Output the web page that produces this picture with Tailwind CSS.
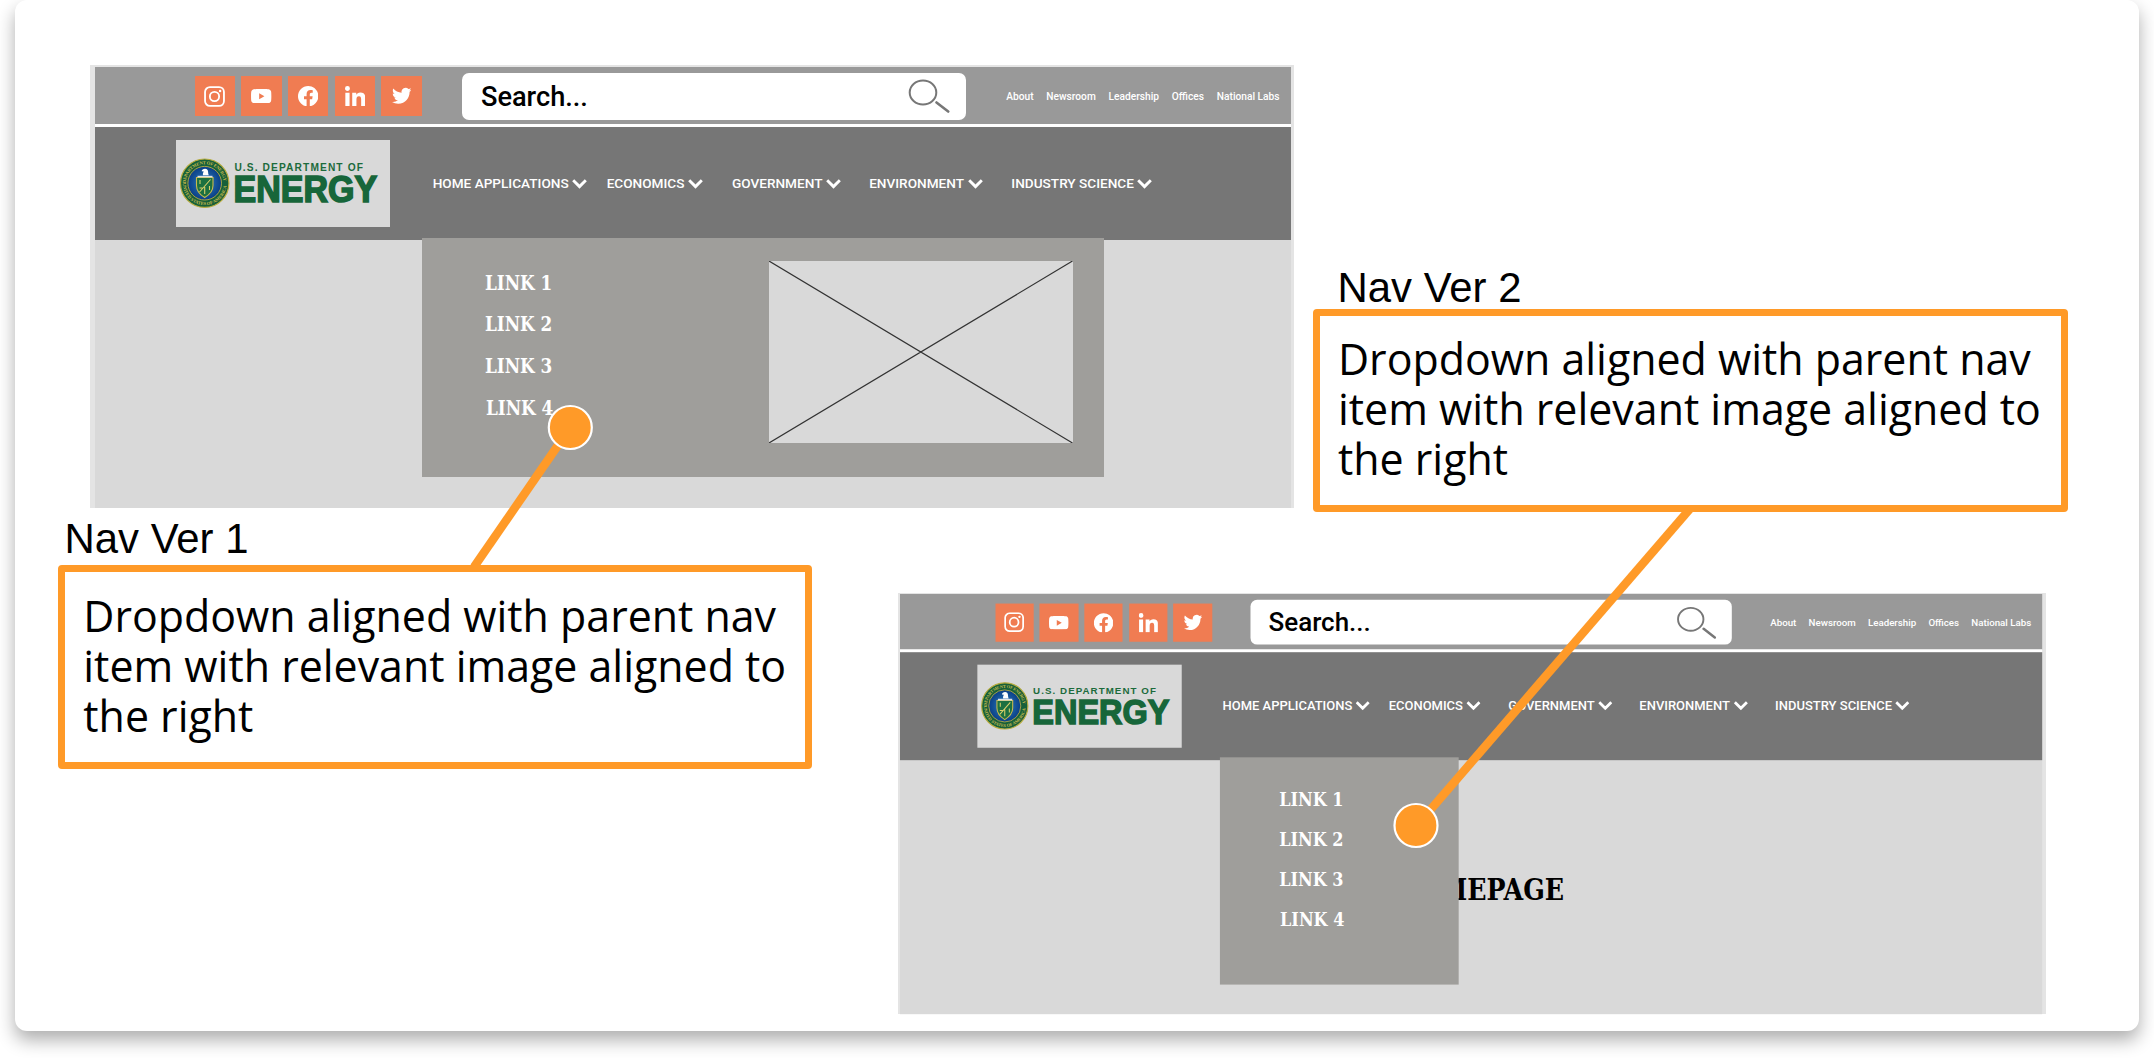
<!DOCTYPE html>
<html lang="en">
<head>
<meta charset="utf-8">
<title>Navigation versions</title>
<script src="https://cdn.jsdelivr.net/npm/@tailwindcss/browser@4"></script>
</head>
<body class="h-[1058px] overflow-hidden bg-white font-['Roboto',sans-serif]">

<!-- Shared site header: utility bar and main navigation -->
<template id="site-header">
  <div class="flex h-[57.5px] w-[1196px] items-center bg-[#999999] pt-[2px] pl-[99.7px] whitespace-nowrap">
    <div class="flex gap-[6.4px]">
      <span class="flex size-[40.3px] items-center justify-center bg-[#f07c52]">
        <svg class="size-[21px]" viewBox="0 0 24 24" fill="none" stroke="white"><rect x="1.2" y="1.2" width="21.6" height="21.6" rx="5.6" stroke-width="2.1"/><circle cx="12" cy="12" r="5.3" stroke-width="2.1"/><circle cx="18.4" cy="5.6" r="1.4" fill="white" stroke="none"/></svg>
      </span>
      <span class="flex size-[40.3px] items-center justify-center bg-[#f07c52]">
        <svg class="h-[14.4px] w-[20.4px]" viewBox="0 0 24 17" fill="white"><path fill-rule="evenodd" d="M12 0C6 0 3.500.2 2.600.5 1.500.8.700 1.600.400 2.600.1 3.600 0 6 0 8.500s.1 4.900.4 5.900c.3 1 1.100 1.800 2.200 2.100.9.3 3.400.5 9.400.5s8.500-.2 9.400-.5c1.100-.3 1.900-1.100 2.200-2.100.3-1 .4-3.400.4-5.900s-.1-4.900-.4-5.900c-.3-1-1.100-1.800-2.200-2.100C20.500.2 18 0 12 0zM9.600 4.900l6.200 3.600-6.200 3.600z"/></svg>
      </span>
      <span class="flex size-[40.3px] items-center justify-center bg-[#f07c52]">
        <svg class="size-[20.4px]" viewBox="0 0 24 24" fill="white"><path d="M24 12.073c0-6.627-5.373-12-12-12s-12 5.373-12 12c0 5.990 4.388 10.954 10.125 11.854v-8.385H7.078v-3.470h3.047V9.430c0-3.007 1.792-4.669 4.533-4.669 1.312 0 2.686.235 2.686.235v2.953H15.830c-1.491 0-1.956.925-1.956 1.874v2.250h3.328l-.532 3.470h-2.796v8.385C19.612 23.027 24 18.062 24 12.073z"/></svg>
      </span>
      <span class="flex size-[40.3px] items-center justify-center bg-[#f07c52]">
        <svg class="size-[20.4px]" viewBox="0 0 448 448" fill="white"><path d="M100.280 448H7.400V148.900h92.880zM53.790 108.100C24.090 108.100 0 83.500 0 53.800a53.790 53.790 0 0 1 107.580 0c0 29.700-24.100 54.300-53.790 54.300zM447.900 448h-92.680V302.400c0-34.700-.7-79.200-48.290-79.200-48.290 0-55.690 37.700-55.690 76.700V448h-92.780V148.900h89.080v40.800h1.300c12.400-23.500 42.690-48.300 87.880-48.300 94 0 111.280 61.900 111.280 142.300V448z"/></svg>
      </span>
      <span class="flex size-[40.3px] items-center justify-center bg-[#f07c52]">
        <svg class="size-[19.6px]" viewBox="0 0 24 24" fill="white"><path d="M23.953 4.570a10 10 0 01-2.825.775 4.958 4.958 0 002.163-2.723c-.951.555-2.005.959-3.127 1.184a4.920 4.920 0 00-8.384 4.482C7.690 8.095 4.067 6.130 1.640 3.162a4.822 4.822 0 00-.666 2.475c0 1.710.870 3.213 2.188 4.096a4.904 4.904 0 01-2.228-.616v.06a4.923 4.923 0 003.946 4.827 4.996 4.996 0 01-2.212.085 4.936 4.936 0 004.604 3.417 9.867 9.867 0 01-6.102 2.105c-.39 0-.779-.023-1.170-.067a13.995 13.995 0 007.557 2.209c9.053 0 13.998-7.496 13.998-13.985 0-.21 0-.42-.015-.63A9.935 9.935 0 0024 4.590z"/></svg>
      </span>
    </div>
    <div class="ml-[40.500px] flex h-[46.700px] w-[504px] items-center rounded-[7px] bg-white pl-[18.700px]">
      <span class="pt-[2px] text-[27.200px] leading-none font-medium text-black">Search...</span>
      <svg class="ml-auto mr-[16.500px] h-[34px] w-[42px]" viewBox="0 0 42 34" fill="none" stroke="#777777"><ellipse cx="15" cy="13.500" rx="13.300" ry="12" stroke-width="2"/><path d="M28.500 23.500 40.200 32.500" stroke-width="2.600" stroke-linecap="round"/></svg>
    </div>
    <nav class="ml-[40px] flex gap-[12.800px] pt-[1.500px] text-[10.200px] leading-none font-medium text-white">
      <span>About</span><span>Newsroom</span><span>Leadership</span><span>Offices</span><span>National Labs</span>
    </nav>
  </div>
  <div class="h-[3px] w-[1196px] bg-white"></div>
  <div class="flex h-[113px] w-[1196px] items-center bg-[#767676] pl-[80.500px]">
    <svg class="h-[87px] w-[214px] bg-[#d9d9d9]" viewBox="0 0 214 87">
      <defs>
        <radialGradient id="seal-blue"><stop offset="0" stop-color="#2f7fc0"/><stop offset="1" stop-color="#0a3f86"/></radialGradient>
        <path id="ring-top" d="M9.800 43.200a18.900 18.900 0 0 1 37.800 0"/>
        <path id="ring-bottom" d="M6.700 43.200a22 22 0 0 0 44 0"/>
      </defs>
      <circle cx="28.700" cy="43.200" r="24.200" fill="#17603a" stroke="#b9ad3f" stroke-width="1.200"/>
      <circle cx="28.700" cy="43.200" r="16.800" fill="url(#seal-blue)" stroke="#b9ad3f" stroke-width=".9"/>
      <g fill="#c9bb4c" font-family="Liberation Serif, serif" font-weight="700" font-size="4.600">
        <text textLength="57"><textPath href="#ring-top">DEPARTMENT OF ENERGY</textPath></text>
        <text textLength="66"><textPath href="#ring-bottom">UNITED STATES OF AMERICA</textPath></text>
      </g>
      <path d="M20.500 37.500h16.500v8c0 6-4 9.500-8.300 12-4.300-2.500-8.200-6-8.200-12z" fill="#1c7040" stroke="#c9bb4c" stroke-width="1.100"/>
      <path d="M23.500 52 34.500 39.500M24 40v4M28.700 47v7M33.500 46v4M23.500 48h3" stroke="#d8cf68" stroke-width="1.100"/>
      <path d="M21.500 35.800h15v1.600h-15z" fill="#dfe3e6"/>
      <path d="M27 35.300c-.4-1.700.3-2.900.8-3.700l-2.100-.3c.1-1.600 1.600-2.600 3.300-2.600 2.200 0 3.100 1.500 3.100 3.300 0 1.400.2 2.400.7 3.300z" fill="white"/>
      <text x="58.400" y="31" font-family="Liberation Sans, Arial, sans-serif" font-weight="700" font-size="10.200" fill="#1c6b3c" textLength="128.500">U.S. DEPARTMENT OF</text>
      <text transform="translate(57.600 61.900) scale(1 1.100)" font-family="Liberation Sans, Arial, sans-serif" font-weight="700" font-size="34" fill="#17663a" stroke="#17663a" stroke-width="1.500">ENERGY</text>
    </svg>
    <nav class="ml-[43.200px] flex text-[13.600px] leading-none font-medium whitespace-nowrap text-white">
      <span class="flex w-[174px] items-center gap-[3.500px]">HOME APPLICATIONS<svg class="h-[10px] w-[15px]" viewBox="0 0 15 10" fill="none" stroke="white" stroke-width="2.900"><path d="M1.200 1.300 7.500 7.600 13.800 1.300"/></svg></span>
      <span class="flex w-[125.300px] items-center gap-[3.500px]">ECONOMICS<svg class="h-[10px] w-[15px]" viewBox="0 0 15 10" fill="none" stroke="white" stroke-width="2.900"><path d="M1.200 1.300 7.500 7.600 13.800 1.300"/></svg></span>
      <span class="flex w-[137.200px] items-center gap-[3.500px]">GOVERNMENT<svg class="h-[10px] w-[15px]" viewBox="0 0 15 10" fill="none" stroke="white" stroke-width="2.900"><path d="M1.200 1.300 7.500 7.600 13.800 1.300"/></svg></span>
      <span class="flex w-[142.200px] items-center gap-[3.500px]">ENVIRONMENT<svg class="h-[10px] w-[15px]" viewBox="0 0 15 10" fill="none" stroke="white" stroke-width="2.900"><path d="M1.200 1.300 7.500 7.600 13.800 1.300"/></svg></span>
      <span class="flex items-center gap-[3.500px]">INDUSTRY SCIENCE<svg class="h-[10px] w-[15px]" viewBox="0 0 15 10" fill="none" stroke="white" stroke-width="2.900"><path d="M1.200 1.300 7.500 7.600 13.800 1.300"/></svg></span>
    </nav>
  </div>
</template>

<main class="relative ml-[15px] h-[1031px] w-[2124px] rounded-[12px] bg-white shadow-[0_9px_18px_rgba(0,0,0,0.32)]">

  <!-- Version 1 -->
  <section class="absolute top-[65px] left-[75px] h-[443px] w-[1204px] bg-[#e4e4e4] pt-[1.500px] pl-[5px]">
    <div class="relative h-[441px] w-[1196px] bg-[#d9d9d9]">
      <div data-header></div>
      <div class="absolute top-[171.500px] left-[327px] flex h-[238.500px] w-[682px] justify-between bg-[#9f9e9b] pt-[22.500px] pr-[31.500px] pl-[62.800px]">
        <ul class="mt-[2px] flex origin-left scale-x-[0.960] flex-col text-[19.500px] leading-[41.700px] font-bold text-white font-['DejaVu_Serif_Condensed','DejaVu_Serif',serif] [font-stretch:condensed]">
          <li>LINK 1</li><li>LINK 2</li><li>LINK 3</li><li class="pl-px">LINK 4</li>
        </ul>
        <svg class="h-[182px] w-[303.500px] bg-[#d9d9d9]" viewBox="0 0 303.500 182" stroke="#333333" stroke-width="1.200"><path d="M0 0 303.500 182M303.500 0 0 182"/></svg>
      </div>
    </div>
  </section>

  <!-- Version 2 -->
  <section class="absolute top-[593px] left-[882.500px] h-[421.300px] w-[1148.500px] bg-[#e4e4e4] pt-px pl-[2px]">
    <div class="relative h-[440px] w-[1196px] origin-top-left scale-[0.955] bg-[#d9d9d9]">
      <div data-header></div>
      <h1 class="absolute top-[288.500px] right-[500.500px] origin-right scale-x-[0.920] text-[32px] leading-[40px] font-bold text-black font-['DejaVu_Serif_Condensed','DejaVu_Serif',serif] [font-stretch:condensed]">HOMEPAGE</h1>
      <div class="absolute top-[170.700px] left-[334.600px] h-[238.700px] w-[250.600px] bg-[#9f9e9b] pt-[24.800px] pl-[62.800px]">
        <ul class="flex origin-left scale-x-[0.960] flex-col text-[19.500px] leading-[41.700px] font-bold text-white font-['DejaVu_Serif_Condensed','DejaVu_Serif',serif] [font-stretch:condensed]">
          <li>LINK 1</li><li>LINK 2</li><li>LINK 3</li><li class="pl-px">LINK 4</li>
        </ul>
      </div>
    </div>
  </section>

  <!-- Leader lines -->
  <svg class="absolute inset-0 h-[1031px] w-[2124px]" viewBox="15 0 2124 1031">
    <g stroke="#ff9a28" stroke-width="8.500"><path d="M570.300 427.500 474 567"/><path d="M1416 826.500 1690.700 508"/></g>
    <g fill="#ff9a28" stroke="white" stroke-width="2.200"><circle cx="570.300" cy="427.500" r="21.500"/><circle cx="1416" cy="825.500" r="21.500"/></g>
  </svg>

  <!-- Annotations -->
  <h2 class="absolute top-[514.500px] left-[49.500px] text-[41.900px] leading-[48px] whitespace-nowrap text-black font-['Liberation_Sans',Arial,sans-serif]">Nav Ver 1</h2>
  <p class="absolute top-[565px] left-[43.300px] h-[203.500px] w-[754px] rounded-[4px] border-[7px] border-[#ff9a28] bg-white pt-[18.500px] pl-[18px] text-[42.900px] leading-[50.200px] whitespace-nowrap text-black font-['Open_Sans',sans-serif]">Dropdown aligned with parent nav<br>item with relevant image aligned to<br>the right</p>

  <h2 class="absolute top-[263.500px] left-[1322.500px] text-[41.900px] leading-[48px] whitespace-nowrap text-black font-['Liberation_Sans',Arial,sans-serif]">Nav Ver 2</h2>
  <p class="absolute top-[309px] left-[1298px] h-[203px] w-[754.500px] rounded-[4px] border-[7px] border-[#ff9a28] bg-white pt-[17.800px] pl-[18px] text-[42.900px] leading-[50.200px] whitespace-nowrap text-black font-['Open_Sans',sans-serif]">Dropdown aligned with parent nav<br>item with relevant image aligned to<br>the right</p>
</main>

<script>
  const header = document.getElementById('site-header');
  document.querySelectorAll('[data-header]').forEach(slot => slot.replaceWith(header.content.cloneNode(true)));
</script>
</body>
</html>
